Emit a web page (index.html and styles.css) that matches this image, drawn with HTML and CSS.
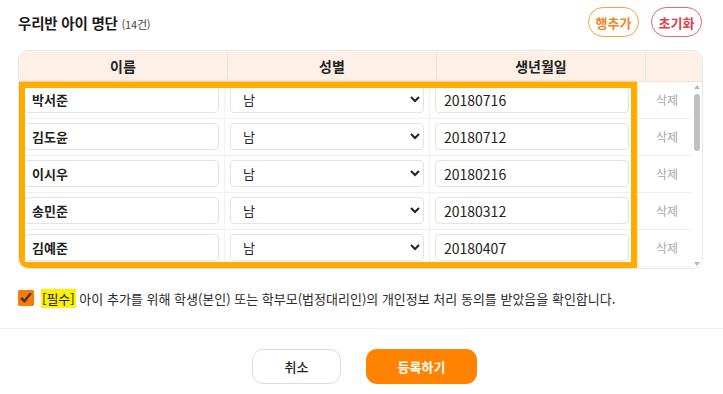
FILE: index.html
```html
<!DOCTYPE html>
<html lang="ko">
<head>
<meta charset="utf-8">
<link rel="stylesheet" href="styles.css">
</head>
<body>
<div class="page">
  <div class="topbar">
    <h1 class="title">우리반 아이 명단 <span class="count">(14건)</span></h1>
    <div class="actions">
      <button class="pill pill-orange">행추가</button>
      <button class="pill pill-red">초기화</button>
    </div>
  </div>

  <div class="table-wrap">
    <div class="thead">
      <div class="th c-name">이름</div>
      <div class="th c-sex">성별</div>
      <div class="th c-date">생년월일</div>
      <div class="th c-del"></div>
    </div>
    <div class="tbody-area">
      <div class="rows">
        <div class="row">
          <div class="td c-name"><input class="inp inp-name" value="박서준"></div>
          <div class="td c-sex"><select class="sel"><option>남</option><option>여</option></select></div>
          <div class="td c-date"><input class="inp" value="20180716"></div>
          <div class="td c-del"><span class="del">삭제</span></div>
        </div>
        <div class="row">
          <div class="td c-name"><input class="inp inp-name" value="김도윤"></div>
          <div class="td c-sex"><select class="sel"><option>남</option><option>여</option></select></div>
          <div class="td c-date"><input class="inp" value="20180712"></div>
          <div class="td c-del"><span class="del">삭제</span></div>
        </div>
        <div class="row">
          <div class="td c-name"><input class="inp inp-name" value="이시우"></div>
          <div class="td c-sex"><select class="sel"><option>남</option><option>여</option></select></div>
          <div class="td c-date"><input class="inp" value="20180216"></div>
          <div class="td c-del"><span class="del">삭제</span></div>
        </div>
        <div class="row">
          <div class="td c-name"><input class="inp inp-name" value="송민준"></div>
          <div class="td c-sex"><select class="sel"><option>남</option><option>여</option></select></div>
          <div class="td c-date"><input class="inp" value="20180312"></div>
          <div class="td c-del"><span class="del">삭제</span></div>
        </div>
        <div class="row">
          <div class="td c-name"><input class="inp inp-name" value="김예준"></div>
          <div class="td c-sex"><select class="sel"><option>남</option><option>여</option></select></div>
          <div class="td c-date"><input class="inp" value="20180407"></div>
          <div class="td c-del"><span class="del">삭제</span></div>
        </div>
      </div>
      <div class="scrollbar">
        <div class="sb-up"></div>
        <div class="sb-track"><div class="sb-thumb"></div></div>
        <div class="sb-down"></div>
      </div>
    </div>
    <div class="highlight"></div>
  </div>

  <label class="agree">
    <input type="checkbox" class="chk" checked>
    <span class="agree-text"><mark class="req">[필수]</mark> 아이 추가를 위해 학생(본인) 또는 학부모(법정대리인)의 개인정보 처리 동의를 받았음을 확인합니다.</span>
  </label>
</div>

<div class="footer">
  <button class="btn btn-cancel">취소</button>
  <button class="btn btn-submit">등록하기</button>
</div>
</body>
</html>
```

FILE: styles.css
```css
* { box-sizing: border-box; }

html, body {
  margin: 0;
  padding: 0;
  background: #fff;
}

body {
  font-family: "Noto Sans CJK KR", "Noto Sans", sans-serif;
  color: #222;
  width: 723px;
  height: 394px;
  overflow: hidden;
}

.page {
  padding: 7px 20px 0 18px;
}

.topbar {
  display: flex;
  align-items: center;
  justify-content: space-between;
  height: 30px;
}

.title {
  margin: 0;
  font-size: 14.5px;
  font-weight: 700;
  color: #1a1a1a;
  letter-spacing: -0.2px;
}

.count {
  font-size: 11px;
  font-weight: 400;
  color: #444;
}

.actions {
  display: flex;
  gap: 12px;
  margin-right: 1px;
}

.pill {
  font-family: inherit;
  height: 30px;
  width: 51px;
  padding: 0;
  border-radius: 15px;
  background: #fff;
  font-size: 13px;
  font-weight: 700;
  cursor: pointer;
}

.pill-orange {
  border: 1.5px solid #f5a240;
  color: #f2851c;
}

.pill-red {
  border: 1.5px solid #e36d6d;
  color: #d9414a;
}

.table-wrap {
  position: relative;
  margin-top: 13px;
  border: 1px solid #e8e8e8;
  border-radius: 10px;
  overflow: hidden;
  background: #fff;
}

.thead {
  display: flex;
  height: 31px;
  background: #fdf1e7;
  border-bottom: 1px solid #efe3d8;
}

.th {
  display: flex;
  align-items: center;
  justify-content: center;
  font-size: 14px;
  font-weight: 700;
  color: #222;
  border-right: 1px solid #f0e2d6;
}

.thead .c-name, .thead .c-sex, .thead .c-date { width: 209px; }
.thead .c-del { flex: 1; border-right: none; }

.tbody-area {
  display: flex;
  height: 186px;
}

.rows {
  flex: 1;
  overflow: hidden;
}

.row {
  display: flex;
  border-bottom: 1px solid #f0f0f0;
}

.td {
  padding: 4px 5px 5px;
  border-right: 1px solid #f2f2f2;
  display: flex;
  align-items: center;
}

.rows .c-name { width: 206px; }
.rows .c-sex { width: 205px; }
.rows .c-date { width: 205px; }
.rows .c-del { flex: 1; border-right: none; justify-content: center; padding-left: 12px; }

.inp {
  width: 100%;
  height: 27px;
  border: 1px solid #e3e3e3;
  border-radius: 4px;
  padding: 0 8px;
  font-family: inherit;
  font-size: 14px;
  color: #222;
  background: #fff;
  outline: none;
}

.inp-name {
  font-weight: 700;
  font-size: 13px;
  padding: 0 7px;
}

.sel {
  width: 100%;
  height: 27px;
  border: 1px solid #e3e3e3;
  border-radius: 4px;
  padding: 0 8px;
  font-family: inherit;
  font-size: 13px;
  color: #222;
  background-color: #fff;
}

.del {
  font-size: 12px;
  color: #a9a9a9;
}

.scrollbar {
  width: 10px;
  display: flex;
  flex-direction: column;
  align-items: center;
  background: #fff;
}

.sb-up, .sb-down {
  width: 0;
  height: 0;
  border-left: 3.5px solid transparent;
  border-right: 3.5px solid transparent;
}

.sb-up {
  margin-top: 3px;
  border-bottom: 4px solid #b8b8b8;
}

.sb-down {
  margin-bottom: 2px;
  border-top: 4px solid #b8b8b8;
}

.sb-track {
  flex: 1;
  width: 100%;
  display: flex;
  justify-content: center;
  padding-top: 5px;
}

.sb-thumb {
  width: 6px;
  height: 57px;
  border-radius: 3px;
  background: #c1c1c1;
}

.highlight {
  position: absolute;
  left: 0;
  top: 31px;
  width: 618px;
  height: 186px;
  border: 6px solid #ffab00;
  box-shadow: 0 0 3px rgba(255, 171, 0, 0.6);
  pointer-events: none;
}

.agree {
  display: flex;
  align-items: center;
  gap: 7px;
  margin-top: 21px;
  height: 16px;
  font-size: 13px;
  color: #2a2a2a;
}

.chk {
  margin: 0;
  width: 16px;
  height: 16px;
  accent-color: #ff7a00;
}

.req {
  background: #fff200;
  color: #222;
  padding: 0 1px;
}

.footer {
  margin-top: 22px;
  border-top: 1px solid #eeeeee;
  display: flex;
  justify-content: center;
  gap: 25px;
  padding-top: 20px;
  padding-left: 6px;
}

.btn {
  font-family: inherit;
  height: 35px;
  border-radius: 11px;
  font-size: 13px;
  font-weight: 700;
  cursor: pointer;
}

.btn-cancel {
  width: 89px;
  background: #fff;
  border: 1px solid #dcdcdc;
  color: #222;
  font-weight: 500;
}

.btn-submit {
  width: 111px;
  background: #ff8200;
  border: none;
  color: #fff;
}
```
